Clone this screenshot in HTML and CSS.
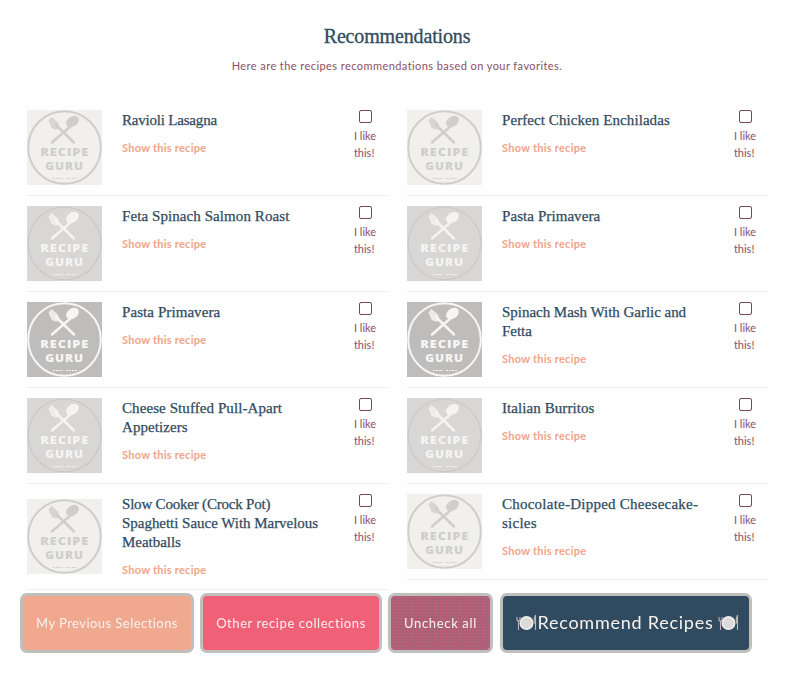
FILE: index.html
```html
<!DOCTYPE html>
<html lang="en">
<head>
<meta charset="utf-8">
<title>Recommendations</title>
<link rel="stylesheet" href="styles.css">
</head>
<body>
<svg class="defs" width="0" height="0" aria-hidden="true">
  <symbol id="logo" viewBox="0 0 75 75">
    <circle class="ring" cx="37.5" cy="37.5" r="36.3"/>
    <path class="stem" d="M29 15 L47 32.5 M45 15 L25 32.5"/>
    <path class="fork" d="M21.5 10.5 l3 -3.5 6 5 q3 4 .5 7 q-3 1.5 -6.500 -1.500z"/>
    <ellipse class="spoon" cx="45.500" cy="11.500" rx="7" ry="5" transform="rotate(-36 45.500 11.500)"/>
    <text class="word" x="13.300" y="46" textLength="49" lengthAdjust="spacingAndGlyphs">RECIPE</text>
    <text class="word" x="18.300" y="59.500" textLength="38.500" lengthAdjust="spacingAndGlyphs">GURU</text>
    <path class="tag" d="M26 68.500h10M39 68.500h11"/>
  </symbol>
  <symbol id="plate" viewBox="0 0 22 18">
    <circle cx="10.500" cy="9" r="7" fill="#eeecea"/>
    <circle cx="10.500" cy="9" r="4.500" fill="#dddbd9" stroke="#cbc9c8" stroke-width=".6"/>
    <path d="M1 3v3l1.500 1.500V16M4 3v3L2.500 7.500M19.500 1v15M19.500 1q-2 4-1 8h1" fill="none" stroke="#c3b4bc" stroke-width="1.100"/>
  </symbol>
</svg>
<header>
  <h1>Recommendations</h1>
  <p class="intro">Here are the recipes recommendations based on your favorites.</p>
</header>
<main class="columns">
  <section class="column">
    <article class="recipe">
      <svg class="logo light"><use href="#logo"/></svg>
      <div class="info"><h2 class="tight">Ravioli Lasagna</h2><a>Show this recipe</a></div>
      <label class="like"><input type="checkbox"><span>I like<br>this!</span></label>
    </article>
    <article class="recipe">
      <svg class="logo medium"><use href="#logo"/></svg>
      <div class="info"><h2>Feta Spinach Salmon Roast</h2><a>Show this recipe</a></div>
      <label class="like"><input type="checkbox"><span>I like<br>this!</span></label>
    </article>
    <article class="recipe">
      <svg class="logo dark"><use href="#logo"/></svg>
      <div class="info"><h2>Pasta Primavera</h2><a>Show this recipe</a></div>
      <label class="like"><input type="checkbox"><span>I like<br>this!</span></label>
    </article>
    <article class="recipe">
      <svg class="logo medium"><use href="#logo"/></svg>
      <div class="info"><h2>Cheese Stuffed Pull-Apart<br>Appetizers</h2><a>Show this recipe</a></div>
      <label class="like"><input type="checkbox"><span>I like<br>this!</span></label>
    </article>
    <article class="recipe">
      <svg class="logo light"><use href="#logo"/></svg>
      <div class="info"><h2 class="snug"><span class="tight">Slow Cooker (Crock Pot)</span><br>Spaghetti Sauce With Marvelous<br>Meatballs</h2><a>Show this recipe</a></div>
      <label class="like"><input type="checkbox"><span>I like<br>this!</span></label>
    </article>
  </section>
  <section class="column">
    <article class="recipe">
      <svg class="logo light"><use href="#logo"/></svg>
      <div class="info"><h2>Perfect Chicken Enchiladas</h2><a>Show this recipe</a></div>
      <label class="like"><input type="checkbox"><span>I like<br>this!</span></label>
    </article>
    <article class="recipe">
      <svg class="logo medium"><use href="#logo"/></svg>
      <div class="info"><h2>Pasta Primavera</h2><a>Show this recipe</a></div>
      <label class="like"><input type="checkbox"><span>I like<br>this!</span></label>
    </article>
    <article class="recipe">
      <svg class="logo dark"><use href="#logo"/></svg>
      <div class="info"><h2 class="snug">Spinach Mash With Garlic and<br>Fetta</h2><a>Show this recipe</a></div>
      <label class="like"><input type="checkbox"><span>I like<br>this!</span></label>
    </article>
    <article class="recipe">
      <svg class="logo medium"><use href="#logo"/></svg>
      <div class="info"><h2>Italian Burritos</h2><a>Show this recipe</a></div>
      <label class="like"><input type="checkbox"><span>I like<br>this!</span></label>
    </article>
    <article class="recipe">
      <svg class="logo light"><use href="#logo"/></svg>
      <div class="info"><h2 class="wide">Chocolate-Dipped Cheesecake-<br>sicles</h2><a>Show this recipe</a></div>
      <label class="like"><input type="checkbox"><span>I like<br>this!</span></label>
    </article>
  </section>
</main>
<nav class="actions">
  <button class="previous">My Previous Selections</button>
  <button class="other">Other recipe collections</button>
  <button class="uncheck">Uncheck all</button>
  <button class="recommend"><svg><use href="#plate"/></svg><span>Recommend Recipes</span><svg><use href="#plate"/></svg></button>
</nav>
</body>
</html>
```
FILE: styles.css
```css
* { box-sizing: border-box; }
body { margin: 0; background: #fefefe; color: #8a5068; font-family: Lato, sans-serif; }
.defs { display: block; }
header { height: 100px; padding-top: 23px; width: 794px; text-align: center; }
h1 { margin: 0; font: 400 20px/26px "Liberation Serif", serif; letter-spacing: -.15px; color: #304b60; -webkit-text-stroke: .3px #304b60; }
.intro { margin: 8px 0 0; font-size: 11px; line-height: 17px; letter-spacing: .43px; }
.columns { display: flex; gap: 19px; padding-left: 27px; }
.column { width: 361px; }
.recipe { display: flex; align-items: center; padding: 10px 0; border-bottom: 1px solid #eeeeec; }
.logo { display: block; flex: none; width: 75px; height: 75px; margin-right: 20px; }
.light { background: #f1f0ed; color: #cfcecc; }
.medium { background: #d8d7d5; color: #f5f4f2; --ring: #c2c1bf; --ring-width: 1.3; --dash: 1.5 1; }
.dark { background: #bebdbb; color: #f7f6f4; }
.ring { fill: none; stroke: var(--ring, currentColor); stroke-width: var(--ring-width, 2); stroke-dasharray: var(--dash, none); }
.stem { fill: none; stroke: currentColor; stroke-width: 2.5; stroke-linecap: round; }
.fork, .spoon { fill: currentColor; }
.fork { opacity: .8; }
.word { font: 800 11px "Open Sans", sans-serif; letter-spacing: .8px; fill: currentColor; }
.tag { stroke: currentColor; stroke-width: 1; stroke-dasharray: 2 1; }
.info { align-self: flex-start; flex: none; width: 213px; white-space: nowrap; }
h2 { margin: 0; padding: 1px 0 9px; font: 400 15px/19px "Liberation Serif", serif; color: #304b60; -webkit-text-stroke: .25px #304b60; letter-spacing: .08px; }
.tight { letter-spacing: -.2px; }
.snug { letter-spacing: -.03px; }
.wide { letter-spacing: .24px; }
.info a { display: block; font-size: 11px; font-weight: 700; line-height: 18px; letter-spacing: .25px; color: #efa58a; }
.like { align-self: flex-start; flex: none; width: 60px; margin-right: -7px; text-align: center; font-size: 11px; line-height: 17px; }
.like input { appearance: none; display: block; width: 13px; height: 13px; margin: 0 auto 4px; border: 1px solid #76465d; border-radius: 2px; background: #fff; }
.like span { display: inline-block; text-align: left; }
.actions { position: fixed; top: 593px; left: 20px; display: flex; gap: 6px; }
button { height: 60px; padding: 0; border: 3px solid #bfbfbe; border-radius: 7px; color: #f8f2ef; font: 400 13px Lato, sans-serif; white-space: nowrap; }
.previous { width: 174px; background: #f0a88e; letter-spacing: .45px; }
.other { width: 182px; background: #f06077; letter-spacing: .58px; }
.uncheck { width: 105px; background: #a96078 radial-gradient(circle, #e05c74 0 .7px, #a96078 1px) 0 0 / 3px 3px; letter-spacing: .65px; }
.recommend { width: 252px; margin-left: 1px; padding-left: 4px; display: flex; align-items: center; justify-content: center; background: #304b5f; font-size: 18px; letter-spacing: .75px; }
.recommend span { margin: 0 5px 2px 0; }
.recommend svg { width: 22px; height: 18px; }
```
